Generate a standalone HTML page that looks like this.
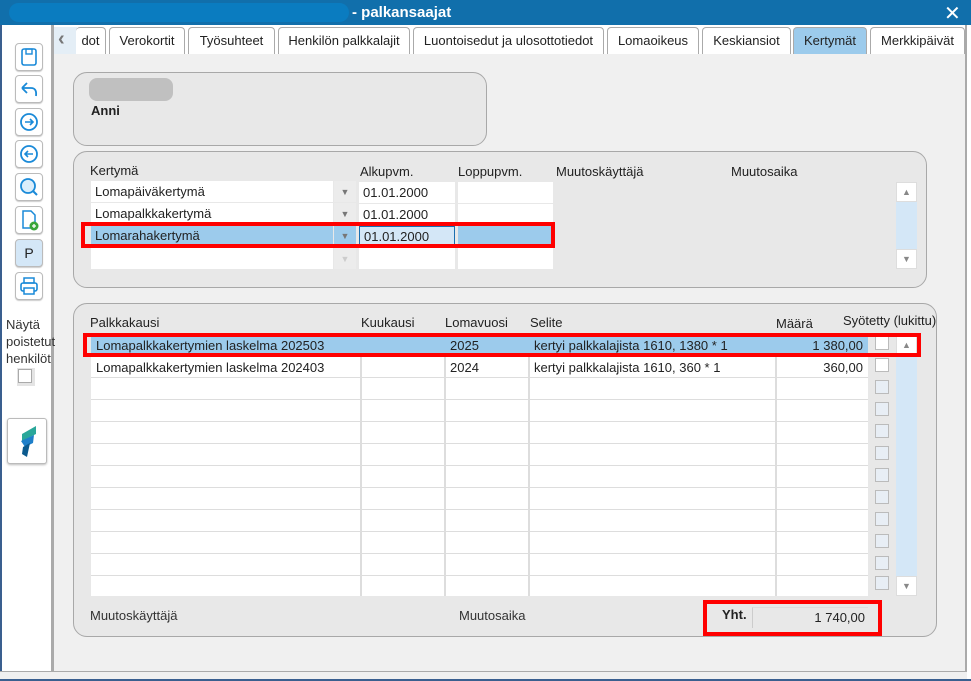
<!DOCTYPE html>
<html><head><meta charset="utf-8"><style>
*{box-sizing:border-box;margin:0;padding:0}
body{width:971px;height:681px;overflow:hidden;background:#f0f0f0;font-family:"Liberation Sans",Arial,sans-serif;font-size:13px;color:#222;position:relative}
.a{position:absolute}
.tb{left:0;top:0;width:971px;height:25px;background:#116fab}
.tab{position:absolute;top:27px;height:27px;background:#fff;border:1px solid #aaa;border-bottom:none;border-radius:4px 4px 0 0;text-align:center;line-height:26px;font-size:13px}
.btn{position:absolute;left:15px;width:28px;height:28px;background:#fff;border:1px solid #bbb;border-radius:4px;box-shadow:0 1px 1px #ccc}
.panel{position:absolute;background:#e8e8e8;border:1px solid #a8a8a8;border-radius:14px}
.cell{position:absolute;background:#fff;height:21px;line-height:22px;padding-left:4px;font-size:13px;white-space:nowrap}
.red{position:absolute;border:4px solid #f00}
.hl{background:#9ccbec}
.cb{position:absolute;width:14px;height:14px;border:1px solid #bbb;background:#e8eef5}
.sb{position:absolute;background:#d4e7f7}
.sbb{position:absolute;width:21px;height:20px;background:#fff;border:1px solid #ddd;color:#888;font-size:9px;text-align:center;line-height:18px}
</style></head><body>
<div class="a tb"></div>
<div class="a" style="left:9px;top:3px;width:340px;height:19px;background:#0a7cc0;border-radius:10px"></div>
<div class="a" style="left:352px;top:4px;color:#fff;font-weight:bold;font-size:15px">- palkansaajat</div>
<div class="a" style="left:944px;top:1px;color:#fff;font-size:20px">✕</div>
<div class="a" style="left:0;top:25px;width:2px;height:656px;background:#3a5f8f"></div>
<div class="a" style="left:2px;top:25px;width:50px;height:656px;background:#fff"></div>
<div class="a" style="left:54px;top:25px;width:911px;height:29px;background:#fff"></div>
<div class="a" style="left:51px;top:25px;width:3px;height:646px;background:#aaa"></div>
<div class="a" style="left:965px;top:25px;width:2px;height:646px;background:#aaa"></div>
<div class="a" style="left:967px;top:25px;width:4px;height:656px;background:#fff"></div>
<div class="a" style="left:0;top:671px;width:967px;height:10px;background:#f0f0f0;border-top:1px solid #aaa"></div>
<div class="a" style="left:0;top:679px;width:971px;height:2px;background:#3a5f8f"></div>

<div class="btn" style="top:43px"><svg width="26" height="26"><rect x="6" y="5" width="14" height="16" rx="2" fill="none" stroke="#1a8ad8" stroke-width="1.6"/><rect x="10" y="5" width="6" height="5" fill="none" stroke="#1a8ad8" stroke-width="1.4"/></svg></div>
<div class="btn" style="top:75px"><svg width="26" height="26"><path d="M6 12 L11 7 M6 12 L11 17 M6 12 H15 Q21 12 20 20" fill="none" stroke="#1a8ad8" stroke-width="1.8"/></svg></div>
<div class="btn" style="top:108px"><svg width="26" height="26"><circle cx="13" cy="13" r="8" fill="none" stroke="#1a8ad8" stroke-width="1.8"/><path d="M9 13 H17 M14 10 L17 13 L14 16" fill="none" stroke="#1a8ad8" stroke-width="1.6"/></svg></div>
<div class="btn" style="top:140px"><svg width="26" height="26"><circle cx="13" cy="13" r="8" fill="none" stroke="#1a8ad8" stroke-width="1.8"/><path d="M17 13 H9 M12 10 L9 13 L12 16" fill="none" stroke="#1a8ad8" stroke-width="1.6"/></svg></div>
<div class="btn" style="top:173px"><svg width="26" height="26"><circle cx="12" cy="12" r="7" fill="#dbeefb" stroke="#1a8ad8" stroke-width="1.8"/><path d="M17 17 L21 21" stroke="#1a8ad8" stroke-width="2"/></svg></div>
<div class="btn" style="top:206px"><svg width="26" height="26"><path d="M7 4 H15 L19 8 V21 H7 Z" fill="none" stroke="#1a8ad8" stroke-width="1.5"/><circle cx="18" cy="19" r="4.5" fill="#3aa63a"/><path d="M16 19 H20 M18 17 V21" stroke="#fff" stroke-width="1.3"/></svg></div>
<div class="btn" style="top:239px;background:#d4e7f7;text-align:center;line-height:26px;font-size:14px">P</div>
<div class="btn" style="top:272px"><svg width="26" height="26"><rect x="8" y="5" width="10" height="5" fill="none" stroke="#1a8ad8" stroke-width="1.5"/><rect x="5" y="10" width="16" height="8" rx="2" fill="none" stroke="#1a8ad8" stroke-width="1.6"/><rect x="8" y="15" width="10" height="6" fill="#fff" stroke="#1a8ad8" stroke-width="1.5"/></svg></div>
<div class="a" style="left:6px;top:316px;font-size:13px;line-height:17px;color:#333">Näytä<br>poistetut<br>henkilöt</div>
<div class="a" style="left:17px;top:368px;width:18px;height:18px;background:#e4e4e4"><div style="margin:1px;width:14px;height:14px;background:#fff;border:1px solid #aaa"></div></div>
<div class="a" style="left:7px;top:418px;width:40px;height:46px;background:#fff;border:1px solid #bbb;border-radius:3px;box-shadow:0 1px 2px #bbb"><svg width="38" height="44"><path d="M28 7 L14 15 L14 22 L28 15 Z" fill="#2aa79a"/><path d="M13 22 L26 16 L25 24 L17 28 Z" fill="#1e7fc9"/><path d="M15 28 L22 24 L19 38 L14 35 Z" fill="#0b5a8e"/></svg></div>

<div class="a" style="left:54px;top:27px;width:23px;height:27px;background:#e4eef6;color:#777;font-size:20px;line-height:24px;padding-left:4px;font-weight:bold">‹</div>
<div class="tab" style="left:76px;width:30px;border-left:none">dot</div>
<div class="tab" style="left:109px;width:76px">Verokortit</div>
<div class="tab" style="left:188px;width:87px">Työsuhteet</div>
<div class="tab" style="left:278px;width:132px">Henkilön palkkalajit</div>
<div class="tab" style="left:413px;width:191px">Luontoisedut ja ulosottotiedot</div>
<div class="tab" style="left:607px;width:92px">Lomaoikeus</div>
<div class="tab" style="left:702px;width:89px">Keskiansiot</div>
<div class="tab" style="left:793px;width:74px;background:#9ccbec">Kertymät</div>
<div class="tab" style="left:870px;width:95px">Merkkipäivät</div>

<div class="panel" style="left:73px;top:72px;width:414px;height:74px"></div>
<div class="a" style="left:89px;top:78px;width:84px;height:23px;background:#c0c0c0;border-radius:8px"></div>
<div class="a" style="left:91px;top:103px;font-weight:bold;font-size:13px">Anni</div>

<div class="panel" style="left:73px;top:151px;width:854px;height:137px"></div>
<div class="a" style="left:90px;top:163px">Kertymä</div>
<div class="a" style="left:360px;top:164px">Alkupvm.</div>
<div class="a" style="left:458px;top:164px">Loppupvm.</div>
<div class="a" style="left:556px;top:164px">Muutoskäyttäjä</div>
<div class="a" style="left:731px;top:164px">Muutosaika</div>

<div class="cell" style="left:91px;top:181px;width:242px">Lomapäiväkertymä</div>
<div class="cell" style="left:91px;top:203px;width:242px">Lomapalkkakertymä</div>
<div class="cell hl" style="left:91px;top:225px;width:242px">Lomarahakertymä</div>
<div class="cell" style="left:91px;top:248px;width:242px"></div>
<div class="cell" style="left:334px;top:181px;width:22px;background:#ececec;color:#777;font-size:9px;padding:0;text-align:center">▼</div>
<div class="cell" style="left:334px;top:203px;width:22px;background:#ececec;color:#777;font-size:9px;padding:0;text-align:center">▼</div>
<div class="cell" style="left:334px;top:225px;width:22px;background:#9ccbec;color:#777;font-size:9px;padding:0;text-align:center">▼</div>
<div class="cell" style="left:334px;top:248px;width:22px;background:#ececec;color:#ccc;font-size:9px;padding:0;text-align:center">▼</div>
<div class="cell" style="left:359px;top:182px;width:96px">01.01.2000</div>
<div class="cell" style="left:359px;top:204px;width:96px">01.01.2000</div>
<div class="cell" style="left:359px;top:226px;width:96px;background:#d4e7f7;border:1px solid #1a6fb0;line-height:20px">01.01.2000</div>
<div class="cell" style="left:359px;top:248px;width:96px"></div>
<div class="cell" style="left:458px;top:182px;width:95px"></div>
<div class="cell" style="left:458px;top:204px;width:95px"></div>
<div class="cell hl" style="left:458px;top:226px;width:95px"></div>
<div class="cell" style="left:458px;top:248px;width:95px"></div>
<div class="red" style="left:81px;top:222px;width:474px;height:26px"></div>
<div class="sb" style="left:896px;top:182px;width:21px;height:87px"></div>
<div class="sbb" style="left:896px;top:182px">▲</div>
<div class="sbb" style="left:896px;top:249px">▼</div>

<div class="panel" style="left:73px;top:303px;width:864px;height:334px"></div>
<div class="a" style="left:90px;top:315px">Palkkakausi</div>
<div class="a" style="left:361px;top:315px">Kuukausi</div>
<div class="a" style="left:445px;top:315px">Lomavuosi</div>
<div class="a" style="left:530px;top:315px">Selite</div>
<div class="a" style="left:776px;top:316px">Määrä</div>
<div class="a" style="left:843px;top:313px">Syötetty (lukittu)</div>
<div class="a" style="left:91px;top:334px;width:777px;height:262px;background:#fff;
background-image:repeating-linear-gradient(to bottom,transparent 0 21px,#ddd 21px 22px),linear-gradient(to right,transparent 269px,#ddd 269px 271px,transparent 271px 353px,#ddd 353px 355px,transparent 355px 437px,#ddd 437px 439px,transparent 439px 684px,#ddd 684px 686px,transparent 686px)"></div>
<div class="a hl" style="left:91px;top:334px;width:777px;height:21px"></div>
<div class="a" style="left:96px;top:338px">Lomapalkkakertymien laskelma 202503</div>
<div class="a" style="left:96px;top:360px">Lomapalkkakertymien laskelma 202403</div>
<div class="a" style="left:450px;top:338px">2025</div>
<div class="a" style="left:450px;top:360px">2024</div>
<div class="a" style="left:534px;top:338px">kertyi palkkalajista 1610, 1380 * 1</div>
<div class="a" style="left:534px;top:360px">kertyi palkkalajista 1610, 360 * 1</div>
<div class="a" style="left:776px;top:338px;width:87px;text-align:right">1 380,00</div>
<div class="a" style="left:776px;top:360px;width:87px;text-align:right">360,00</div>
<div class="cb" style="left:875px;top:336px;background:#fff"></div>
<div class="cb" style="left:875px;top:358px;background:#fff"></div>
<div class="cb" style="left:875px;top:380px"></div><div class="cb" style="left:875px;top:402px"></div>
<div class="cb" style="left:875px;top:424px"></div><div class="cb" style="left:875px;top:446px"></div>
<div class="cb" style="left:875px;top:468px"></div><div class="cb" style="left:875px;top:490px"></div>
<div class="cb" style="left:875px;top:512px"></div><div class="cb" style="left:875px;top:534px"></div>
<div class="cb" style="left:875px;top:556px"></div><div class="cb" style="left:875px;top:576px"></div>
<div class="sb" style="left:896px;top:334px;width:21px;height:262px"></div>
<div class="sbb" style="left:896px;top:335px">▲</div>
<div class="sbb" style="left:896px;top:576px">▼</div>
<div class="red" style="left:83px;top:333px;width:838px;height:24px"></div>
<div class="a" style="left:90px;top:608px;color:#333">Muutoskäyttäjä</div>
<div class="a" style="left:459px;top:608px;color:#333">Muutosaika</div>
<div class="a" style="left:722px;top:607px;font-weight:bold">Yht.</div>
<div class="a" style="left:752px;top:607px;width:116px;height:21px;border-left:1px solid #ccc;border-top:1px solid #ddd;text-align:right;padding-right:3px;line-height:20px">1 740,00</div>
<div class="red" style="left:703px;top:600px;width:179px;height:36px"></div>
</body></html>
